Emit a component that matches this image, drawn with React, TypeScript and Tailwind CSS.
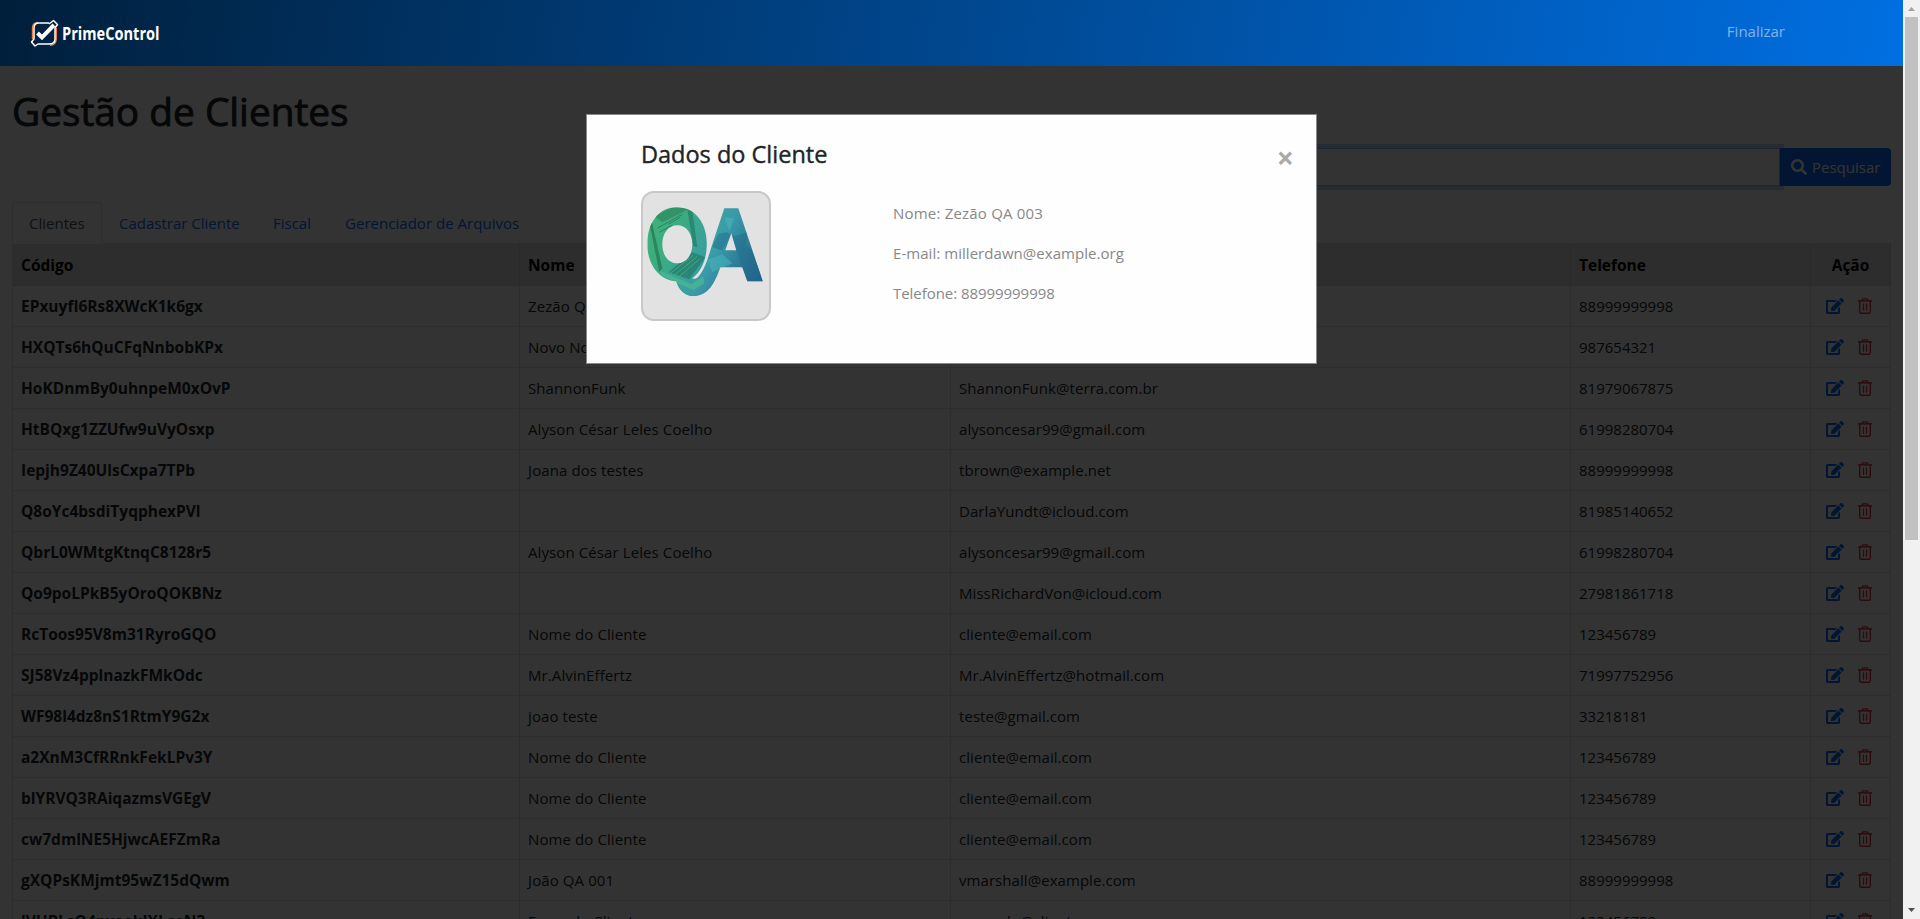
import React from "react";
import { FaEdit, FaSearch } from "react-icons/fa";

const rows: [string, string, string, string][] = [
  ["EPxuyfI6Rs8XWcK1k6gx", "Zezão QA 003", "millerdawn@example.org", "88999999998"],
  ["HXQTs6hQuCFqNnbobKPx", "Novo Nome", "novo@email.com", "987654321"],
  ["HoKDnmBy0uhnpeM0xOvP", "ShannonFunk", "ShannonFunk@terra.com.br", "81979067875"],
  ["HtBQxg1ZZUfw9uVyOsxp", "Alyson César Leles Coelho", "alysoncesar99@gmail.com", "61998280704"],
  ["Iepjh9Z40UlsCxpa7TPb", "Joana dos testes", "tbrown@example.net", "88999999998"],
  ["Q8oYc4bsdiTyqphexPVl", "", "DarlaYundt@icloud.com", "81985140652"],
  ["QbrL0WMtgKtnqC8128r5", "Alyson César Leles Coelho", "alysoncesar99@gmail.com", "61998280704"],
  ["Qo9poLPkB5yOroQOKBNz", "", "MissRichardVon@icloud.com", "27981861718"],
  ["RcToos95V8m31RyroGQO", "Nome do Cliente", "cliente@email.com", "123456789"],
  ["SJ58Vz4pplnazkFMkOdc", "Mr.AlvinEffertz", "Mr.AlvinEffertz@hotmail.com", "71997752956"],
  ["WF98l4dz8nS1RtmY9G2x", "joao teste", "teste@gmail.com", "33218181"],
  ["a2XnM3CfRRnkFekLPv3Y", "Nome do Cliente", "cliente@email.com", "123456789"],
  ["blYRVQ3RAiqazmsVGEgV", "Nome do Cliente", "cliente@email.com", "123456789"],
  ["cw7dmlNE5HjwcAEFZmRa", "Nome do Cliente", "cliente@email.com", "123456789"],
  ["gXQPsKMjmt95wZ15dQwm", "João QA 001", "vmarshall@example.com", "88999999998"],
  ["lVHBLsQ4pxeekJXLceN3", "Exemplo Cliente", "exemplo@cliente.com", "123456789"],
];

const columns = "grid grid-cols-[507px_431px_620px_240px_80px]";

function Logo() {
  return (
    <div className="flex items-center gap-[3px]">
      <svg width="29" height="29" viewBox="0 0 29 29" fill="none">
        <path d="M8 3.500 Q2.500 4 2.500 9 V20" stroke="#f58233" strokeWidth="1.4" />
        <path d="M26.300 9 V20 Q26 26 20 26.300" stroke="#f58233" strokeWidth="1.4" />
        <path
          d="M19 4 H9 Q4 4 4 9 V20 L1.5 23 L5 27 L8 25 H19 Q25 25 25 20 V9 L27.5 5.5 L23.5 1.5 L19 5"
          stroke="#fff" strokeWidth="1.5" strokeLinejoin="round"
        />
        <path d="M7.5 14 L12 18.5 L24 6" stroke="#fff" strokeWidth="4" />
      </svg>
      <span className="origin-left scale-x-[0.81] text-[18px] font-bold leading-[29px] text-white">PrimeControl</span>
    </div>
  );
}

function TrashIcon({ className }: { className: string }) {
  return (
    <svg viewBox="0 0 14 16" fill="none" stroke="currentColor" className={className}>
      <path d="M0 2.900 H14" strokeWidth="1.5" />
      <path d="M3.700 2.500 L5 0.800 H9 L10.300 2.500" strokeWidth="1.3" />
      <path d="M1.700 3 V14 Q1.700 15.300 3 15.300 H11 Q12.300 15.300 12.300 14 V3" strokeWidth="1.4" />
      <path d="M5.500 5.500 V12.700 M8.500 5.500 V12.700" strokeWidth="1.2" />
    </svg>
  );
}

function QaPhoto() {
  return (
    <svg width="126" height="126" viewBox="0 0 126 126">
      <defs>
        <linearGradient id="qa" x1="0" y1="0" x2="1" y2="0.5">
          <stop offset="0" stopColor="#43b576" />
          <stop offset="0.35" stopColor="#3bab84" />
          <stop offset="0.65" stopColor="#3a9ca8" />
          <stop offset="1" stopColor="#235f88" />
        </linearGradient>
        <clipPath id="letters">
          <path clipRule="evenodd" d="M34.500 15 C53 15 64.500 31 64.500 51 C64.500 66 60 78 50 86 Q54 88 58 82 C63 75 66 65 69 55 L82 16 H96 L120.500 89 H105 L100 75 H78 C73 90 66 104 51 104 C42 104 36 97 34 89 C16 88 5 71 5 52 C5 31 16 15 34.500 15 Z M35 33 C26 33 20 41 20 52 C20 63 26 71 35 71 C44 71 50 63 50 52 C50 41 44 33 35 33 Z M89 41 L83 58 H94 Z" />
        </clipPath>
      </defs>
      <g clipPath="url(#letters)" transform="translate(-0.7 -0.7)">
        <rect width="126" height="126" fill="url(#qa)" />
        <path d="M9 27 L20 76 L17 80 L7 30 Z" fill="#23734f" opacity=".7" />
        <path d="M12 24 L32 14 L46 17 L20 30 Z" fill="#2c8058" opacity=".6" />
        <path d="M15 36 L40 22 M17 40 L30 33 M26 32 L38 25" stroke="#237353" strokeWidth="1" opacity=".7" />
        <path d="M26 80 L50 60 L63 65 L47 87 Z M45 17 L51 54 L55 55 L50 18 Z" fill="#20745c" opacity=".6" />
        <path d="M28 81 L51 63 M32 83 L55 64 M36 85 L58 66" stroke="#54b990" opacity=".6" />
        <path d="M17 78 L49 92 L61 84 L62 91 L51 98 L20 84 Z" fill="#4aba91" opacity=".7" />
        <path d="M76 42 L84 40 L92 44 L105 40 L103 54 L109 57 L122 91 L101 89 L98 67 L94 58 L89 42 L80 58 L70 55 Z" fill="#226b8d" opacity=".5" />
        <path d="M65 68 L80 62 L90 71 L70 80 Z M82 25 L92 26 L87 39 Z" fill="#4ab8bf" opacity=".5" />
      </g>
    </svg>
  );
}

function Navbar() {
  return (
    <header className="relative z-20 flex h-[66px] items-center justify-between bg-[linear-gradient(100deg,#001f3b,#006fe2)] pl-[30px] pr-[118px]">
      <Logo />
      <a className="pb-[5px] text-[15px] leading-6 text-white/50">Finalizar</a>
    </header>
  );
}

function Tab({ label, active, className }: { label: string; active?: boolean; className: string }) {
  return (
    <div
      className={
        "h-[42px] whitespace-nowrap rounded-t border px-4 pt-2 leading-6 " +
        (active ? "border-[#dee2e6] border-b-white bg-white text-[#495057] " : "border-transparent text-[#0d6efd] ") +
        className
      }
    >
      {label}
    </div>
  );
}

function ClientTable() {
  return (
    <div className="w-[1879px] border-l border-[#dee2e6] text-[#212529]">
      <div className={columns + " h-[42px] border-b border-[#d2d2d2] bg-[#e0e0e0] text-[15.500px] font-bold leading-[43px] text-black"}>
        <div className="border-r border-[#d2d2d2] px-2">Código</div>
        <div className="border-r border-[#d2d2d2] px-2">Nome</div>
        <div className="border-r border-[#d2d2d2] px-2">E-mail</div>
        <div className="border-r border-[#d2d2d2] px-2">Telefone</div>
        <div className="border-r border-[#d2d2d2] text-center">Ação</div>
      </div>
      {rows.map(([code, name, email, phone]) => (
        <div key={code} className={columns + " h-[41px] leading-[40px]"}>
          <div className="border-b border-r border-[#dee2e6] px-2 text-[15.500px] font-bold">{code}</div>
          <div className="border-b border-r border-[#dee2e6] px-2 tracking-[0.1px]">{name}</div>
          <div className="border-b border-r border-[#dee2e6] px-2 tracking-[0.06px]">{email}</div>
          <div className="border-b border-r border-[#dee2e6] px-2">{phone}</div>
          <div className="flex items-center border-b border-r border-[#dee2e6] pl-[15px]">
            <FaEdit className="h-4 w-[18px] text-[#0d6efd]" />
            <TrashIcon className="ml-[14px] h-4 w-[14px] text-[#dc3545]" />
          </div>
        </div>
      ))}
    </div>
  );
}

function ClientModal() {
  return (
    <div className="absolute left-[586px] top-[114px] z-30 flex h-[250px] w-[731px] flex-col border border-[#888] bg-[#fefefe] pl-[54px]">
      <div className="flex h-[76px] items-start justify-between pr-[22px]">
        <h2 className="pt-[25px] text-[23.500px] leading-[29px] text-[#212529] [-webkit-text-stroke:0.4px_#212529]">
          Dados do Cliente
        </h2>
        <span className="pt-[22px] text-[30px] font-bold leading-[42px] text-[#aaa]">×</span>
      </div>
      <div className="flex">
        <div className="h-[130px] w-[130px] overflow-hidden rounded-[13px] border-2 border-[#c8c8c8] bg-[#e2e2e2]">
          <QaPhoto />
        </div>
        <div className="flex flex-col gap-4 pl-[122px] pt-[10px] leading-6 tracking-[0.05px] text-[#888]">
          <p className="tracking-[0.2px]">Nome: Zezão QA 003</p>
          <p>E-mail: millerdawn@example.org</p>
          <p className="tracking-[-0.05px]">Telefone: 88999999998</p>
        </div>
      </div>
    </div>
  );
}

export default function App() {
  return (
    <div className="relative flex h-[919px] w-[1920px] overflow-hidden bg-white font-['Open_Sans',sans-serif] text-[15px]">
      <div className="w-[1903px] overflow-hidden">
        <Navbar />
        <main className="pl-3 pt-[21px]">
          <h1 className="mb-px text-[38.800px] leading-[48px] text-[#212529] [-webkit-text-stroke:0.9px_#212529]">
            Gestão de Clientes
          </h1>
          <div className="flex justify-end pr-3 pt-3">
            <div className="h-[38px] w-[840px] rounded-l border border-[#86b7fe] bg-white shadow-[0_0_0_4px_#c2dbfe]" />
            <button className="relative flex h-[38px] w-[111px] items-center gap-[5px] rounded-r bg-[#0d6efd] pl-[11px] text-white">
              <FaSearch className="size-4" />
              Pesquisar
            </button>
          </div>
          <nav className="mt-4 flex h-[42px] w-[1879px] border-b border-[#dee2e6]">
            <Tab label="Clientes" active className="w-[90px]" />
            <Tab label="Cadastrar Cliente" className="w-[154px]" />
            <Tab label="Fiscal" className="w-[72px]" />
            <Tab label="Gerenciador de Arquivos" className="w-[210px] tracking-[0.03px]" />
          </nav>
          <ClientTable />
        </main>
      </div>
      <div className="absolute inset-y-0 left-0 z-10 w-[1903px] bg-black/80" />
      <ClientModal />
      <div className="flex w-[17px] flex-col items-center justify-between bg-[#f1f1f1]">
        <svg width="17" height="17" viewBox="0 0 17 17"><path d="M5 11 L8.500 7 L12 11 Z" fill="#a3a3a3" /></svg>
        <div className="mb-auto h-[523px] w-[13px] bg-[#c1c1c1]" />
        <svg width="17" height="17" viewBox="0 0 17 17"><path d="M5 6 L8.500 10 L12 6 Z" fill="#505050" /></svg>
      </div>
    </div>
  );
}
